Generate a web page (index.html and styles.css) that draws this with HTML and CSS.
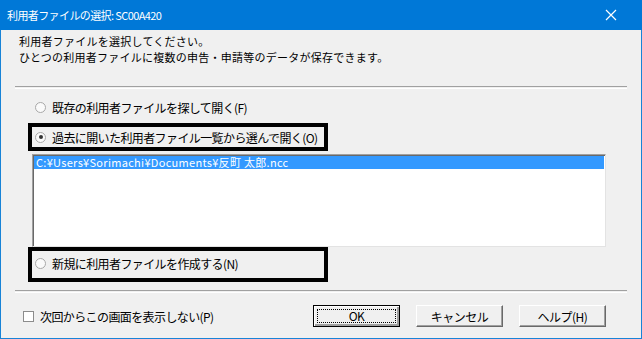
FILE: index.html
```html
<!DOCTYPE html>
<html lang="ja">
<head>
    <meta charset="UTF-8">
    <title>利用者ファイルの選択: SC00A420</title>
    <link rel="stylesheet" href="styles.css">
</head>
<body>
    <div class="window">
        <div class="titlebar">
            <span class="title">利用者ファイルの選択: SC00A420</span>
            <svg class="close" width="12" height="12" viewBox="0 0 12 12">
                <path d="M1 1 L11 11 M11 1 L1 11" stroke="#ffffff" stroke-width="1.2" fill="none"/>
            </svg>
        </div>
        <div class="content">
            <div class="intro">
                <p>利用者ファイルを選択してください。</p>
                <p>ひとつの利用者ファイルに複数の申告・申請等のデータが保存できます。</p>
            </div>
            <div class="separator"></div>

            <div class="options">
                <label class="radio-row plain">
                    <span class="radio"></span>
                    <span>既存の利用者ファイルを探して開く(F)</span>
                </label>
                <label class="radio-row marked">
                    <span class="radio checked"></span>
                    <span>過去に開いた利用者ファイル一覧から選んで開く(O)</span>
                </label>
                <div class="filelist">
                    <div class="file selected">C:¥Users¥Sorimachi¥Documents¥反町 太郎.ncc</div>
                </div>
                <label class="radio-row marked last">
                    <span class="radio"></span>
                    <span>新規に利用者ファイルを作成する(N)</span>
                </label>
            </div>
            <div class="separator lower"></div>

            <div class="footer">
                <label class="check-row">
                    <span class="checkbox"></span>
                    <span>次回からこの画面を表示しない(P)</span>
                </label>
                <div class="buttons">
                    <button class="default"><span class="focus">OK</span></button>
                    <button>キャンセル</button>
                    <button>ヘルプ(H)</button>
                </div>
            </div>
        </div>
    </div>
</body>
</html>
```
FILE: styles.css
```css
body {
    margin: 0;
    font-family: "Noto Sans CJK JP", "Liberation Sans", sans-serif;
    font-size: 12px;
    color: #000;
    background-color: #ffffff;
}
.window {
    width: 642px;
    height: 339px;
    box-sizing: border-box;
    border: 1px solid #1883d7;
    border-top: none;
    background-color: #f0f0f0;
    display: flex;
    flex-direction: column;
}
.titlebar {
    height: 30px;
    margin: 0 -1px;
    background-color: #0078d7;
    color: #ffffff;
    display: flex;
    align-items: center;
    justify-content: space-between;
    padding: 0 25px 0 7px;
    flex-shrink: 0;
}
.title {
    font-size: 11px;
    letter-spacing: -0.6px;
}
.content {
    flex: 1;
    padding: 0 14px 0 14px;
}
.intro {
    padding: 3px 0 0 4px;
}
.intro p {
    margin: 0;
    font-size: 11px;
    line-height: 16px;
    letter-spacing: 0.25px;
}
.separator {
    height: 1px;
    border-top: 1px solid #a0a0a0;
    border-bottom: 1px solid #ffffff;
    margin-top: 21px;
}
.separator.lower {
    margin-top: 8px;
}
.options {
    padding: 8px 0 0 13px;
    width: 578px;
}
.radio-row {
    display: flex;
    align-items: center;
    gap: 6px;
    height: 20px;
    letter-spacing: -0.6px;
}
.radio-row.plain {
    padding-left: 7px;
    margin-bottom: 6px;
}
.radio-row.marked {
    width: 289px;
    border: 4px solid #000;
    padding-left: 3px;
}
.radio-row.last {
    height: 25px;
    padding-bottom: 2px;
}
.radio {
    width: 11px;
    height: 11px;
    border-radius: 50%;
    border: 1px solid #a8a8a8;
    background-color: #fafafa;
    box-sizing: border-box;
    display: flex;
    align-items: center;
    justify-content: center;
}
.radio.checked::after {
    content: "";
    width: 4px;
    height: 4px;
    border-radius: 50%;
    background-color: #333;
}
.filelist {
    margin: 3px 0 0 4px;
    height: 93px;
    box-sizing: border-box;
    background-color: #ffffff;
    border-top: 1px solid #a0a0a0;
    border-left: 1px solid #a0a0a0;
    border-right: 1px solid #e3e3e3;
    border-bottom: 1px solid #e3e3e3;
    box-shadow: inset 1px 1px 0 #696969;
    padding: 1px 1px 0 1px;
}
.file {
    height: 13px;
    line-height: 13px;
    font-size: 11px;
    padding-left: 2px;
    letter-spacing: 0.3px;
}
.file.selected {
    background-color: #3399ff;
    color: #ffffff;
}
.footer {
    display: flex;
    align-items: center;
    justify-content: space-between;
    padding: 12px 21px 0 8px;
}
.check-row {
    display: flex;
    align-items: center;
    gap: 6px;
    letter-spacing: -0.6px;
}
.checkbox {
    width: 11px;
    height: 11px;
    box-sizing: border-box;
    border: 1px solid #8c8c8c;
    background-color: #ffffff;
}
.buttons {
    display: flex;
    gap: 16px;
}
button {
    width: 87px;
    height: 22px;
    font-family: "Noto Sans CJK JP", "Liberation Sans", sans-serif;
    font-size: 12px;
    letter-spacing: -0.5px;
    background-color: #f0f0f0;
    border: 1px solid;
    border-color: #ffffff #696969 #696969 #ffffff;
    box-shadow: inset -1px -1px 0 #a0a0a0;
    padding: 0;
    color: #000;
}
button.default {
    border: 1px solid #000;
    box-shadow: inset 1px 1px 0 #ffffff, inset -2px -2px 0 #a0a0a0;
    padding: 3px;
}
.focus {
    display: block;
    height: 100%;
    box-sizing: border-box;
    border: 1px dotted #000;
    line-height: 12px;
}
```
